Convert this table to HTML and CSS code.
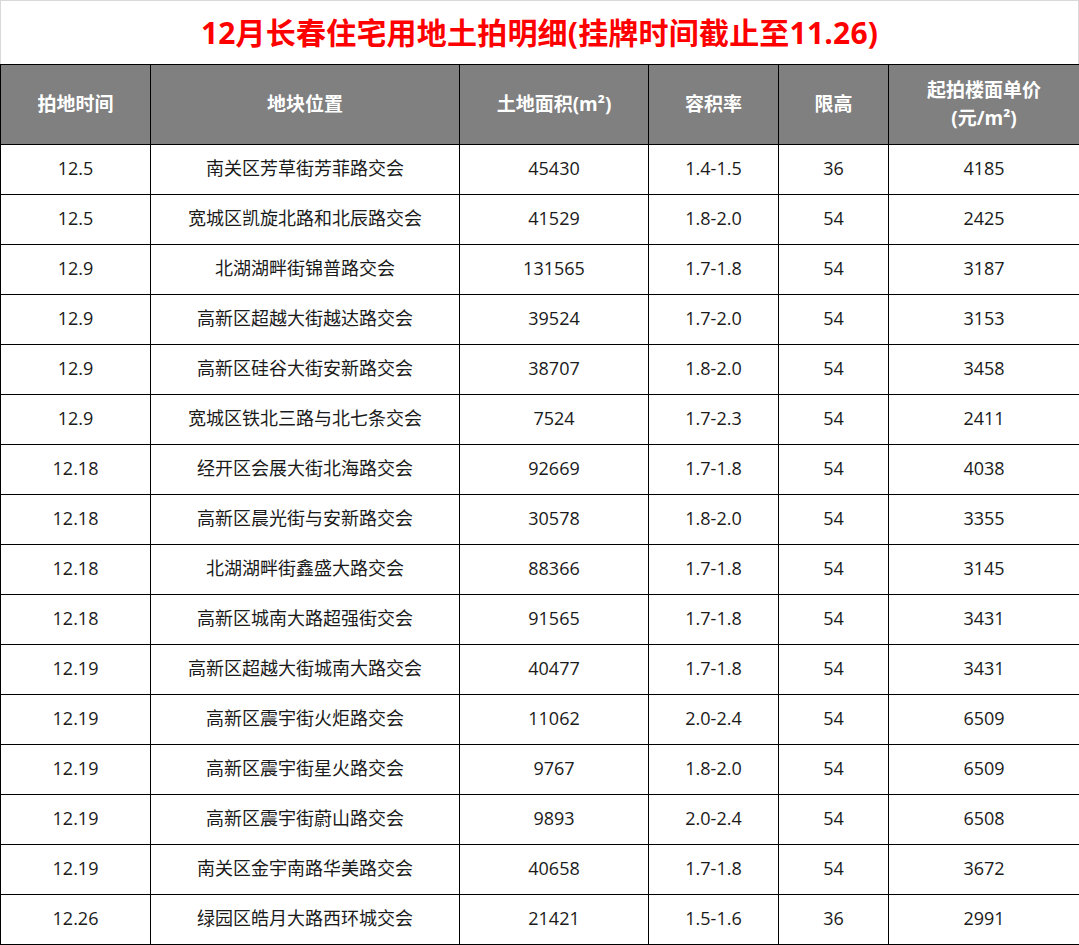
FILE: index.html
```html
<!DOCTYPE html>
<html lang="zh-CN">
<head>
<meta charset="utf-8">
<title>12月长春住宅用地土拍明细</title>
<link rel="stylesheet" href="styles.css">
</head>
<body>
<div class="sheet">
  <div class="title">12月长春住宅用地土拍明细(挂牌时间截止至11.26)</div>
  <table class="grid">
    <colgroup>
      <col class="c1"><col class="c2"><col class="c3"><col class="c4"><col class="c5"><col class="c6">
    </colgroup>
    <thead>
      <tr>
        <th>拍地时间</th>
        <th>地块位置</th>
        <th>土地面积(m²)</th>
        <th>容积率</th>
        <th>限高</th>
        <th>起拍楼面单价<br>(元/m²)</th>
      </tr>
    </thead>
    <tbody>
      <tr><td>12.5</td><td>南关区芳草街芳菲路交会</td><td>45430</td><td>1.4-1.5</td><td>36</td><td>4185</td></tr>
      <tr><td>12.5</td><td>宽城区凯旋北路和北辰路交会</td><td>41529</td><td>1.8-2.0</td><td>54</td><td>2425</td></tr>
      <tr><td>12.9</td><td>北湖湖畔街锦普路交会</td><td>131565</td><td>1.7-1.8</td><td>54</td><td>3187</td></tr>
      <tr><td>12.9</td><td>高新区超越大街越达路交会</td><td>39524</td><td>1.7-2.0</td><td>54</td><td>3153</td></tr>
      <tr><td>12.9</td><td>高新区硅谷大街安新路交会</td><td>38707</td><td>1.8-2.0</td><td>54</td><td>3458</td></tr>
      <tr><td>12.9</td><td>宽城区铁北三路与北七条交会</td><td>7524</td><td>1.7-2.3</td><td>54</td><td>2411</td></tr>
      <tr><td>12.18</td><td>经开区会展大街北海路交会</td><td>92669</td><td>1.7-1.8</td><td>54</td><td>4038</td></tr>
      <tr><td>12.18</td><td>高新区晨光街与安新路交会</td><td>30578</td><td>1.8-2.0</td><td>54</td><td>3355</td></tr>
      <tr><td>12.18</td><td>北湖湖畔街鑫盛大路交会</td><td>88366</td><td>1.7-1.8</td><td>54</td><td>3145</td></tr>
      <tr><td>12.18</td><td>高新区城南大路超强街交会</td><td>91565</td><td>1.7-1.8</td><td>54</td><td>3431</td></tr>
      <tr><td>12.19</td><td>高新区超越大街城南大路交会</td><td>40477</td><td>1.7-1.8</td><td>54</td><td>3431</td></tr>
      <tr><td>12.19</td><td>高新区震宇街火炬路交会</td><td>11062</td><td>2.0-2.4</td><td>54</td><td>6509</td></tr>
      <tr><td>12.19</td><td>高新区震宇街星火路交会</td><td>9767</td><td>1.8-2.0</td><td>54</td><td>6509</td></tr>
      <tr><td>12.19</td><td>高新区震宇街蔚山路交会</td><td>9893</td><td>2.0-2.4</td><td>54</td><td>6508</td></tr>
      <tr><td>12.19</td><td>南关区金宇南路华美路交会</td><td>40658</td><td>1.7-1.8</td><td>54</td><td>3672</td></tr>
      <tr><td>12.26</td><td>绿园区皓月大路西环城交会</td><td>21421</td><td>1.5-1.6</td><td>36</td><td>2991</td></tr>
    </tbody>
  </table>
</div>
</body>
</html>
```

FILE: styles.css
```css
html, body {
  margin: 0;
  padding: 0;
  background: #ffffff;
}

.sheet {
  width: 1079px;
  font-family: "Open Sans", "Noto Sans CJK SC", sans-serif;
}

.title {
  box-sizing: border-box;
  height: 64px;
  border: 1px solid #d9d9d9;
  border-bottom: none;
  display: flex;
  align-items: center;
  justify-content: center;
  color: #ff0000;
  font-weight: 700;
  font-size: 30px;
  letter-spacing: 0.2px;
  padding-bottom: 4px;
}

.grid {
  width: 1079px;
  border-collapse: collapse;
  table-layout: fixed;
}

.c1 { width: 150px; }
.c2 { width: 309px; }
.c3 { width: 189px; }
.c4 { width: 130px; }
.c5 { width: 110px; }
.c6 { width: 191px; }

.grid th,
.grid td {
  border: 1px solid #000000;
  text-align: center;
  padding: 0;
}

.grid th {
  height: 77px;
  background: #808080;
  color: #ffffff;
  font-weight: 700;
  font-size: 19px;
  line-height: 28px;
  padding-bottom: 2px;
}

.grid td {
  height: 46px;
  color: #1a1a1a;
  font-size: 18px;
  line-height: 24px;
  padding-bottom: 3px;
}
```
